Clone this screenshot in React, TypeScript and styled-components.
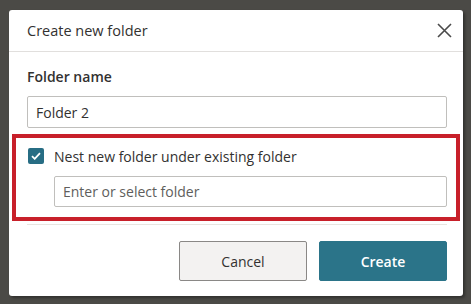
import React, { useState } from "react";
import styled, { createGlobalStyle } from "styled-components";

const GlobalStyle = createGlobalStyle`
  html, body {
    margin: 0;
    padding: 0;
    background: #4b4a46;
  }
  body {
    font-family: "Open Sans", "Noto Sans", sans-serif;
    color: #323130;
  }
`;

const Backdrop = styled.div`
  width: 471px;
  height: 304px;
  padding: 10px 0 0 9px;
  box-sizing: border-box;
`;

const Dialog = styled.div`
  width: 454px;
  background: #ffffff;
  border-radius: 3px;
  box-shadow: 2px 2px 3px rgba(0, 0, 0, 0.35);
`;

const Header = styled.div`
  display: flex;
  align-items: center;
  justify-content: space-between;
  height: 41px;
  padding: 0 11px 0 18px;
  border-bottom: 1px solid #e1dfdd;
`;

const Title = styled.h2`
  margin: 0;
  font-size: 14.5px;
  font-weight: 400;
  color: #323130;
`;

const CloseButton = styled.button`
  display: flex;
  align-items: center;
  justify-content: center;
  width: 16px;
  height: 16px;
  padding: 0;
  border: none;
  background: none;
  color: #4a4a4a;
  cursor: pointer;
`;

const Body = styled.div`
  padding: 15px 16px 0 18px;
`;

const Label = styled.label`
  display: block;
  font-size: 14px;
  font-weight: 600;
  line-height: 20px;
  margin-bottom: 9px;
`;

const TextInput = styled.input<{ $height: number }>`
  display: block;
  width: 100%;
  box-sizing: border-box;
  height: ${(p) => p.$height}px;
  padding: 0 8px;
  border: 1px solid #c0bfbc;
  border-radius: 2px;
  font-family: inherit;
  font-size: 14px;
  color: #323130;
  outline: none;

  &::placeholder {
    color: #605e5c;
  }
`;

const Highlight = styled.div`
  margin: 6px -13px 0 -15px;
  border: 4px solid #c8202a;
  padding: 10px 9px 10px 12px;
`;

const CheckRow = styled.label`
  display: flex;
  align-items: center;
  gap: 10px;
  height: 16px;
  font-size: 14px;
  cursor: pointer;
`;

const CheckBox = styled.span<{ $checked: boolean }>`
  display: flex;
  align-items: center;
  justify-content: center;
  width: 16px;
  height: 16px;
  border-radius: 2px;
  background: ${(p) => (p.$checked ? "#276d84" : "#ffffff")};
  border: ${(p) => (p.$checked ? "none" : "1px solid #605e5c")};
  box-sizing: border-box;
`;

const Nested = styled.div`
  margin: 12px 0 0 26px;
`;

const Divider = styled.hr`
  margin: 3px 0 0;
  border: none;
  border-top: 1px solid #e8e5e0;
`;

const Footer = styled.div`
  display: flex;
  justify-content: flex-end;
  gap: 12px;
  padding: 16px 0 15px;
`;

const Button = styled.button<{ $primary?: boolean }>`
  width: 128px;
  height: 40px;
  border-radius: 2px;
  font-family: inherit;
  font-size: 14px;
  font-weight: ${(p) => (p.$primary ? 600 : 400)};
  cursor: pointer;
  background: ${(p) => (p.$primary ? "#2b7489" : "#f3f2f1")};
  color: ${(p) => (p.$primary ? "#ffffff" : "#323130")};
  border: 1px solid ${(p) => (p.$primary ? "#2b7489" : "#8a8886")};
`;

export default function App() {
  const [name, setName] = useState("Folder 2");
  const [nested, setNested] = useState(true);

  return (
    <>
      <GlobalStyle />
      <Backdrop>
        <Dialog>
          <Header>
            <Title>Create new folder</Title>
            <CloseButton aria-label="Close">
              <svg width="15" height="15" viewBox="0 0 15 15">
                <path d="M1 1 L14 14 M14 1 L1 14" stroke="currentColor" strokeWidth="1.6" fill="none" />
              </svg>
            </CloseButton>
          </Header>
          <Body>
            <Label>Folder name</Label>
            <TextInput $height={32} value={name} onChange={(e) => setName(e.target.value)} />
            <Highlight>
              <CheckRow onClick={() => setNested(!nested)}>
                <CheckBox $checked={nested}>
                  {nested && (
                    <svg width="10" height="8" viewBox="0 0 10 8">
                      <path d="M1 4.2 L3.7 6.8 L9 1.2" stroke="#ffffff" strokeWidth="1.8" fill="none" />
                    </svg>
                  )}
                </CheckBox>
                Nest new folder under existing folder
              </CheckRow>
              <Nested>
                <TextInput $height={31} placeholder="Enter or select folder" />
              </Nested>
            </Highlight>
            <Divider />
            <Footer>
              <Button>Cancel</Button>
              <Button $primary>Create</Button>
            </Footer>
          </Body>
        </Dialog>
      </Backdrop>
    </>
  );
}
